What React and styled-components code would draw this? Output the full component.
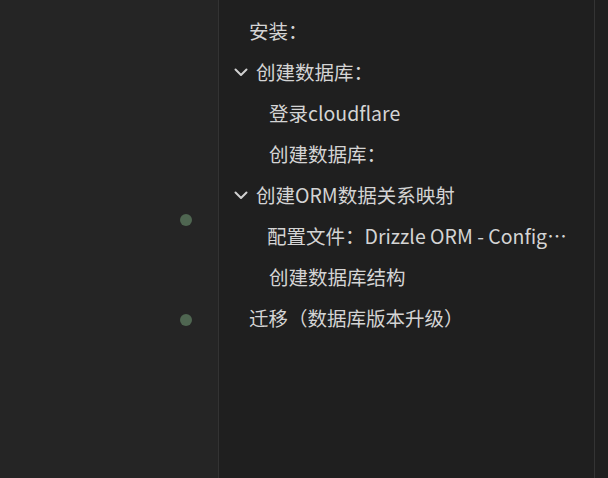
import React from "react";
import styled, { createGlobalStyle } from "styled-components";

const Global = createGlobalStyle`
  html, body { margin: 0; padding: 0; background: #1f1f1f; }
  body { width: 608px; height: 478px; overflow: hidden; }
`;

const Page = styled.div`
  display: flex;
  width: 608px;
  height: 478px;
  font-family: "Noto Sans CJK SC", "Noto Sans", sans-serif;
`;

const Gutter = styled.div`
  width: 219px;
  background: #252525;
  border-right: 1px solid #333333;
  display: flex;
  flex-direction: column;
  align-items: flex-end;
  padding: 214px 26px 0 0;
  gap: 88px;
  box-sizing: border-box;
`;

const Dot = styled.div`
  width: 12px;
  height: 12px;
  border-radius: 50%;
  background: #4f6651;
`;

const Outline = styled.div`
  width: 376px;
  background: #1f1f1f;
  border-right: 1px solid #343434;
  padding-top: 10px;
  display: flex;
  flex-direction: column;
  box-sizing: border-box;
`;

const Right = styled.div`
  flex: 1;
  background: #1f1f1f;
`;

const Row = styled.div`
  height: 41px;
  display: flex;
  align-items: center;
  padding-left: ${(p) => p.$indent}px;
  color: #d4d4d4;
  font-size: 19.5px;
  white-space: nowrap;
  min-width: 0;
`;

const Chevron = styled.svg`
  width: 16px;
  height: 16px;
  margin-right: 7px;
  flex: none;
`;

const Label = styled.span`
  overflow: hidden;
  text-overflow: ellipsis;
  white-space: nowrap;
  max-width: ${(p) => p.$max || 400}px;
`;

const ChevronIcon = () => (
  <Chevron viewBox="0 0 16 16" fill="none">
    <path d="M2.5 5.5 L8 11 L13.5 5.5" stroke="#d0d0d0" strokeWidth="2" strokeLinecap="round" strokeLinejoin="round" />
  </Chevron>
);

const items = [
  { text: "安装：", indent: 30 },
  { text: "创建数据库：", indent: 14, chevron: true },
  { text: "登录cloudflare", indent: 50 },
  { text: "创建数据库：", indent: 50 },
  { text: "创建ORM数据关系映射", indent: 14, chevron: true },
  { text: "配置文件：Drizzle ORM - Configurations", indent: 48, max: 306 },
  { text: "创建数据库结构", indent: 50 },
  { text: "迁移（数据库版本升级）", indent: 30 },
];

export default function App() {
  return (
    <>
      <Global />
      <Page>
        <Gutter>
          <Dot />
          <Dot />
        </Gutter>
        <Outline>
          {items.map((it, i) => (
            <Row key={i} $indent={it.indent}>
              {it.chevron && <ChevronIcon />}
              <Label $max={it.max}>{it.text}</Label>
            </Row>
          ))}
        </Outline>
        <Right />
      </Page>
    </>
  );
}
